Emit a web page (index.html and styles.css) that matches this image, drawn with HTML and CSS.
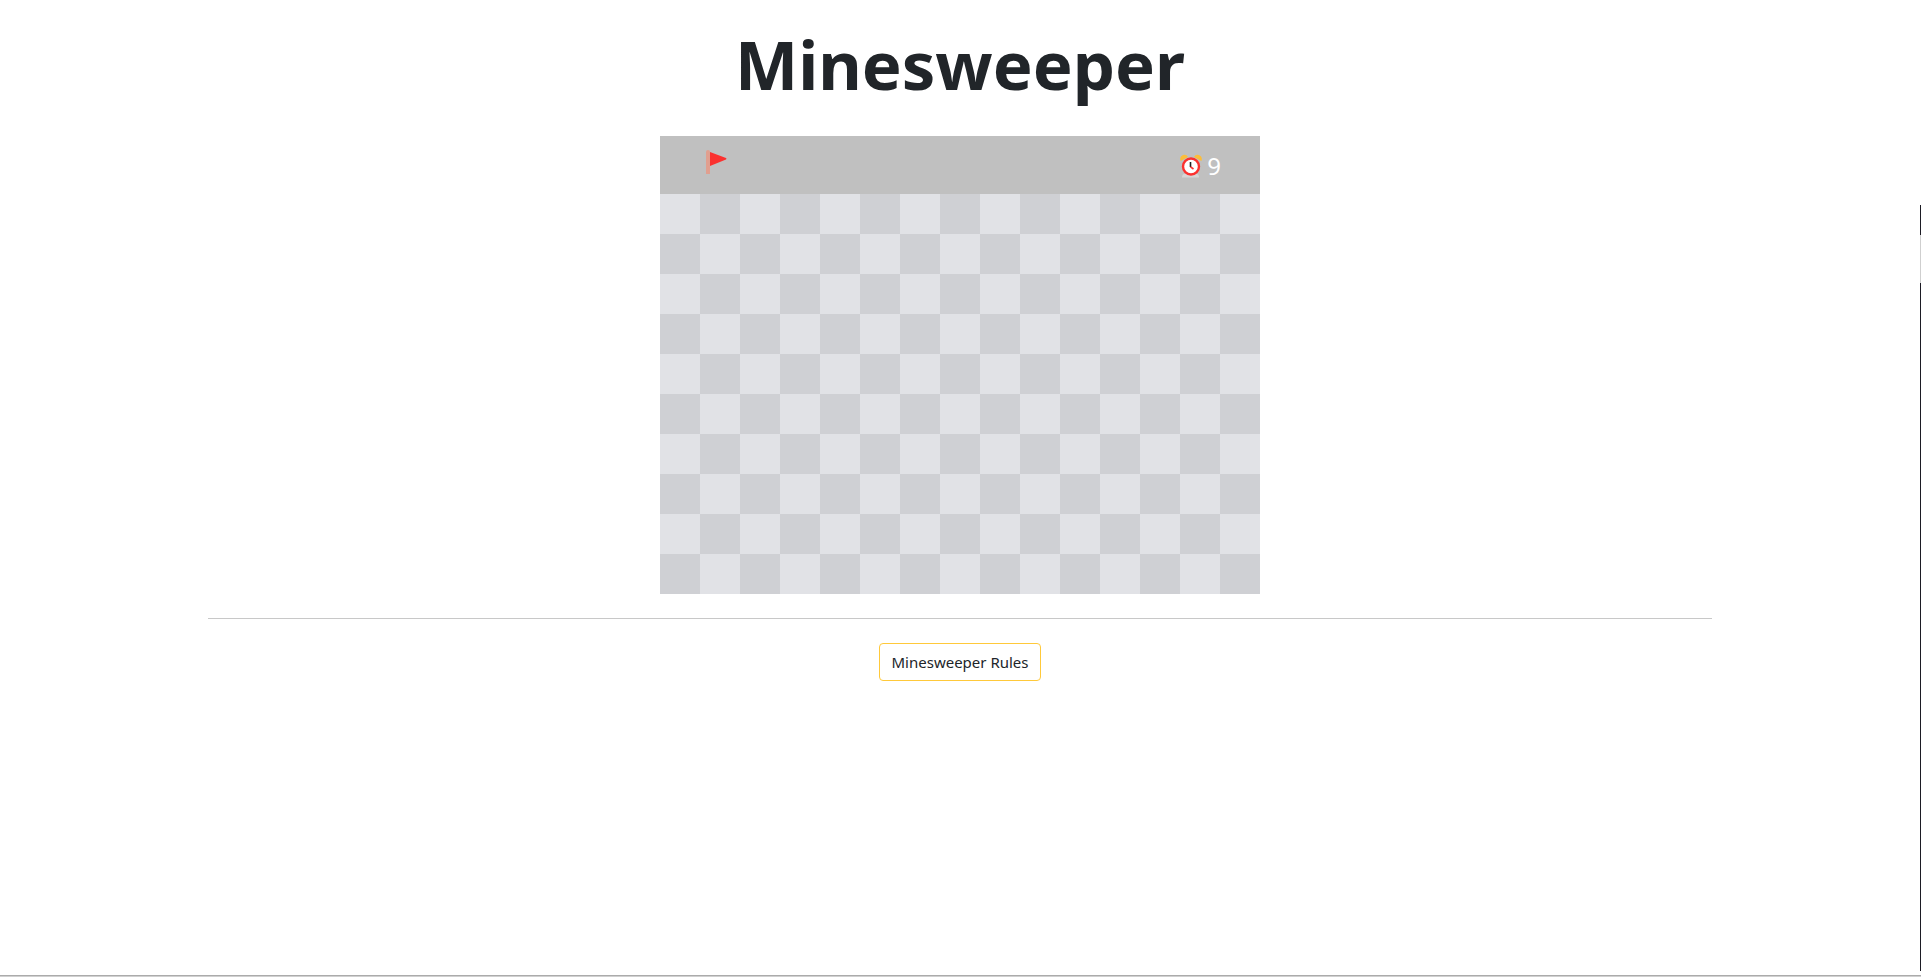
FILE: index.html
```html
<!DOCTYPE html>
<html lang="en">
<head>
<meta charset="utf-8">
<title>Minesweeper</title>
<link rel="stylesheet" href="styles.css">
</head>
<body>
<main class="page">
  <h1 class="title">Minesweeper</h1>
  <section class="game">
    <div class="toolbar">
      <svg class="flag" viewBox="0 0 22 24" role="img" aria-label="Flags">
        <path d="M0 24 V2 Q0 0 2 0 Q4 0 4 2 V24 Z" fill="#e19f8f"/>
        <path d="M4 2 L20 8 Q21 8.7 20 9.4 L4 16 Z" fill="#fb312f"/>
      </svg>
      <div class="timer">
        <svg class="clock" viewBox="0 0 22 24" role="img" aria-label="Time">
          <path d="M2 23.5 Q2 19.5 6 19.5 H15 Q19 19.5 19 23.5 Z" fill="#d6d6d6"/>
          <path d="M0.6 7 Q-1 2.5 3 1 Q6.500 0 8 3 Z M21.400 7 Q23 2.500 19 1 Q15.500 0 14 3 Z" fill="#fbbd3a"/>
          <circle cx="11" cy="12.500" r="8" fill="#fff" stroke="#fb312f" stroke-width="2.400"/>
          <path d="M10.500 8 V13" stroke="#212121" stroke-width="1.600" fill="none"/>
          <path d="M10.500 12.800 L13.500 15" stroke="#fb312f" stroke-width="1.600" fill="none"/>
        </svg>
        <span>9</span>
      </div>
    </div>
    <div class="board" id="board"></div>
  </section>
  <hr class="divider">
  <button class="rules" type="button">Minesweeper Rules</button>
</main>
<div class="edge"></div>
<div class="baseline"></div>
<script src="board.js"></script>
</body>
</html>
```
FILE: styles.css
```css
* { box-sizing: border-box; }
body {
  margin: 0;
  min-height: 100vh;
  display: grid;
  grid-template: 1fr 2px / 1fr 1px;
  background: #fff;
  color: #212529;
  font: 15px/24px "Segoe UI", "Noto Sans", "Open Sans", sans-serif;
}
.page {
  display: flex;
  flex-direction: column;
  align-items: center;
  padding: 24px 208px;
}
.title {
  margin: 0 0 32px;
  font-size: 67px;
  font-weight: 700;
  line-height: 80px;
}
.game { width: 600px; max-width: 100%; }
.toolbar {
  display: flex;
  justify-content: space-between;
  padding: 13px 39px 11px 46px;
  background: #c0c0c0;
  color: #fff;
}
.flag { width: 22px; height: 24px; margin-top: 1px; }
.timer {
  display: flex;
  align-items: center;
  gap: 5px;
  font-size: 24px;
  line-height: 34px;
}
.clock { width: 22px; height: 24px; }
.board { display: grid; grid-template-columns: repeat(15, 1fr); }
.cell {
  aspect-ratio: 1;
  padding: 0;
  border: 0;
  background: #e1e2e6;
}
.cell.dark { background: #cfd0d4; }
.divider {
  width: 100%;
  margin: 24px 0;
  border: 0;
  border-top: 1px solid #c8c8c8;
}
.rules {
  min-width: 162px;
  padding: 6px 8px;
  border: 1px solid #ffc93a;
  border-radius: 4px;
  background: #fff;
  color: #212529;
  font: inherit;
}
.edge {
  margin: 205px 0 4px;
  background: linear-gradient(#1c1b24 30px, #cfcfcf 30px, #cfcfcf 78px, #1c1b24 78px);
}
.baseline {
  grid-column: 1 / -1;
  background: #d0d0d0;
  border-top: 1px solid #ababab;
}
```
FILE: board.js
```js
const board = document.getElementById("board");
for (let row = 0; row < 10; row++) {
  for (let col = 0; col < 15; col++) {
    const cell = document.createElement("button");
    cell.type = "button";
    cell.className = (row + col) % 2 ? "cell dark" : "cell";
    cell.setAttribute("aria-label", `Row ${row + 1}, column ${col + 1}`);
    board.append(cell);
  }
}
```
